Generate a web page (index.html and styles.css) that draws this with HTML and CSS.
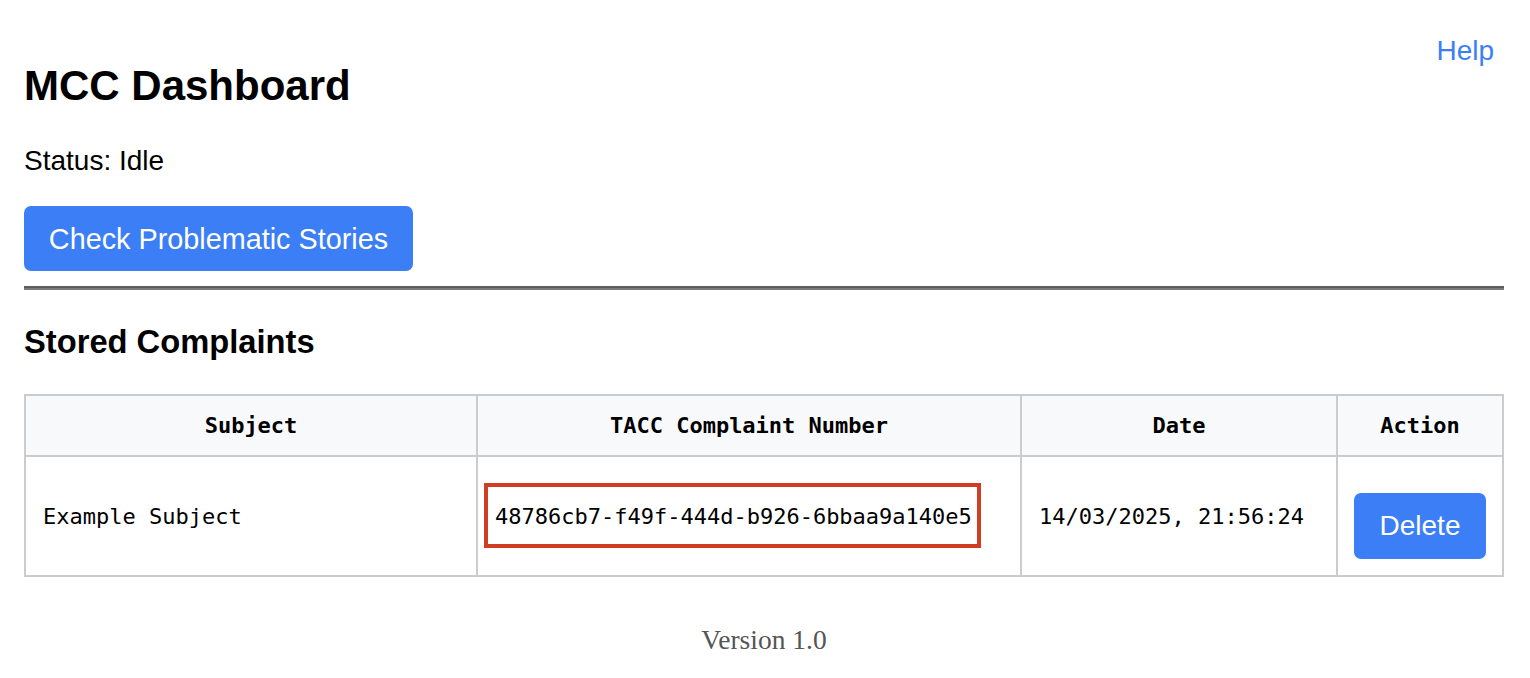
FILE: index.html
```html
<!DOCTYPE html>
<html lang="en">
<head>
<meta charset="utf-8">
<title>MCC Dashboard</title>
<link rel="stylesheet" href="styles.css">
</head>
<body>
<div class="page">
  <header class="header">
    <h1 class="title">MCC Dashboard</h1>
    <a class="help" href="#">Help</a>
  </header>
  <p class="status">Status: Idle</p>
  <button class="btn btn-check">Check Problematic Stories</button>
  <hr class="divider">
  <h2 class="section-title">Stored Complaints</h2>
  <table class="complaints">
    <colgroup>
      <col class="c1"><col class="c2"><col class="c3"><col class="c4">
    </colgroup>
    <thead>
      <tr><th>Subject</th><th>TACC Complaint Number</th><th>Date</th><th>Action</th></tr>
    </thead>
    <tbody>
      <tr>
        <td>Example Subject</td>
        <td><span class="highlight">48786cb7-f49f-444d-b926-6bbaa9a140e5</span></td>
        <td>14/03/2025, 21:56:24</td>
        <td class="action"><button class="btn btn-delete">Delete</button></td>
      </tr>
    </tbody>
  </table>
  <footer class="footer">Version 1.0</footer>
</div>
</body>
</html>
```
FILE: styles.css
```css
html, body {
  margin: 0;
  padding: 0;
  background: #ffffff;
}

.page {
  padding: 35px 26px 0 24px;
  font-family: "Liberation Sans", Arial, sans-serif;
  color: #000;
}

.header {
  display: flex;
  justify-content: space-between;
  align-items: flex-start;
}

.title {
  margin: 27px 0 0 0;
  font-size: 42px;
  line-height: 48px;
  font-weight: bold;
}

.help {
  margin-right: 10px;
  font-size: 28px;
  line-height: 31px;
  color: #3b7ef6;
  text-decoration: none;
}

.status {
  margin: 35px 0 29px 0;
  font-size: 28px;
  line-height: 32px;
}

.btn {
  font-family: "Liberation Sans", Arial, sans-serif;
  background: #3b7ef6;
  color: #ffffff;
  border: none;
  border-radius: 7px;
  cursor: pointer;
}

.btn-check {
  display: block;
  width: 389px;
  height: 65px;
  padding: 0;
  font-size: 28.8px;
  line-height: 32px;
}

.divider {
  margin: 15px 0 0 0;
  height: 0;
  border: none;
  border-top: 2px solid #5c5c5c;
  border-bottom: 2px solid #7a7a7a;
}

.section-title {
  margin: 33px 0 34px 0;
  font-size: 32.7px;
  line-height: 37px;
  font-weight: bold;
}

.complaints {
  width: 1480px;
  table-layout: fixed;
  border-collapse: collapse;
  font-family: "DejaVu Sans Mono", "Liberation Mono", monospace;
  font-size: 22px;
  line-height: 25px;
}

.c1 { width: 452px; }
.c2 { width: 544px; }
.c3 { width: 316px; }
.c4 { width: 166px; }

.complaints th,
.complaints td {
  border: 2px solid #cccccc;
  vertical-align: middle;
}

.complaints th {
  background: #f8f9fa;
  font-weight: bold;
  text-align: center;
  padding: 17px 17px 17px;
}

.complaints td {
  text-align: left;
  white-space: nowrap;
  padding: 17px 17px 16px;
}

.complaints td.action {
  padding-left: 16px;
}

.highlight {
  position: relative;
  display: inline-block;
}

.highlight::after {
  content: "";
  position: absolute;
  left: -11px;
  right: -9px;
  top: -21px;
  bottom: -19px;
  border: 4px solid #d13c25;
}

.btn-delete {
  display: inline-block;
  vertical-align: top;
  margin-top: 19px;
  width: 132px;
  height: 66px;
  padding: 0;
  font-size: 28px;
  line-height: 32px;
}

.footer {
  margin-top: 47px;
  text-align: center;
  font-family: "Liberation Serif", "Times New Roman", serif;
  font-size: 27.5px;
  line-height: 31px;
  color: #555555;
}
```
